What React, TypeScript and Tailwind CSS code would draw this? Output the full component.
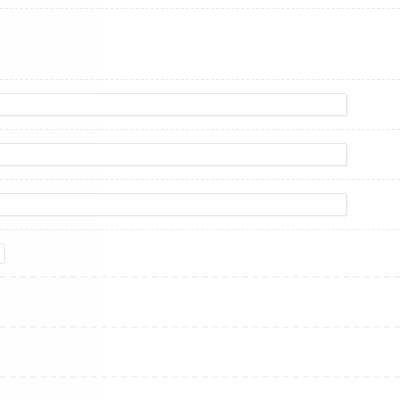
import React from "react";

const Field = () => (
  <div className="-ml-5 w-[367px] h-[23px] border border-[#e6e6e6] rounded-[2px] bg-white shadow-[1px_1px_0_#f4f4f4]" />
);

const App: React.FC = () => {
  return (
    <div className="w-[400px] h-[400px] overflow-hidden bg-[linear-gradient(to_right,#fefefe_0,#fefefe_100px,#ffffff_100px)] pt-2 font-['Liberation_Sans',sans-serif]">
      {/* top block */}
      <div className="h-[71px] border-t border-dashed border-[#e9e9e9]" />

      {/* input rows */}
      {[0, 1, 2].map((i) => (
        <div key={i} className="h-[50px] border-t border-dashed border-[#e9e9e9] pt-[13px]">
          <Field />
        </div>
      ))}

      {/* button row */}
      <div className="h-[47px] border-t border-dashed border-[#ececec] pt-[13px]">
        <div className="-ml-10 w-[45px] h-[21px] border border-[#e6e6e6] rounded-[3px] bg-white" />
      </div>

      {/* empty rows */}
      <div className="h-[50px] border-t-2 border-dashed border-[#f3f3f3]" />
      <div className="h-[50px] border-t-2 border-dashed border-[#f3f3f3]" />
      <div className="h-[50px] border-t-2 border-dashed border-[#f3f3f3]" />
    </div>
  );
};

export default App;
